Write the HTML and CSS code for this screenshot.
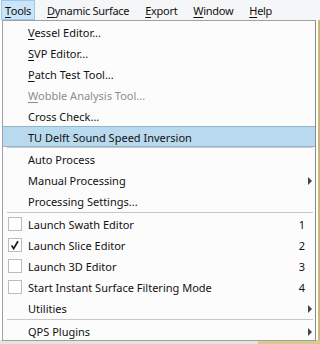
FILE: index.html
```html
<!DOCTYPE html>
<html>
<head>
<meta charset="utf-8">
<link rel="stylesheet" href="styles.css">
</head>
<body>
<div class="bar">
  <span class="top active"><u>T</u>ools</span>
  <span class="top"><u>D</u>ynamic Surface</span>
  <span class="top"><u>E</u>xport</span>
  <span class="top"><u>W</u>indow</span>
  <span class="top"><u>H</u>elp</span>
</div>
<div class="app">
  <div class="canvas"></div>
  <div class="status"><span class="status-fill"></span><span class="status-tan"></span></div>
</div>
<div class="popup">
  <div class="item"><span class="label"><u>V</u>essel Editor...</span></div>
  <div class="item"><span class="label"><u>S</u>VP Editor...</span></div>
  <div class="item"><span class="label"><u>P</u>atch Test Tool...</span></div>
  <div class="item disabled"><span class="label"><u>W</u>obble Analysis Tool...</span></div>
  <div class="item"><span class="label">Cross Check...</span></div>
  <div class="item hover"><span class="label">TU Delft Sound Speed Inversion</span></div>
  <div class="sep"></div>
  <div class="item"><span class="label">Auto Process</span></div>
  <div class="item"><span class="label">Manual Processing</span><span class="arrow"></span></div>
  <div class="item"><span class="label">Processing Settings...</span></div>
  <div class="sep"></div>
  <div class="item"><span class="box"></span><span class="label">Launch Swath Editor</span><span class="key">1</span></div>
  <div class="item"><span class="box"><svg width="12" height="12" viewBox="0 0 12 12"><path d="M2.6 6.4 L4.6 9.6 L9 2.2" fill="none" stroke="#1a1a1a" stroke-width="1.7" stroke-linejoin="miter"/></svg></span><span class="label">Launch Slice Editor</span><span class="key">2</span></div>
  <div class="item"><span class="box"></span><span class="label">Launch 3D Editor</span><span class="key">3</span></div>
  <div class="item"><span class="box"></span><span class="label">Start Instant Surface Filtering Mode</span><span class="key">4</span></div>
  <div class="item"><span class="label">Utilities</span><span class="arrow"></span></div>
  <div class="sep"></div>
  <div class="item"><span class="label">QPS Plugins</span><span class="arrow"></span></div>
</div>
</body>
</html>
```

FILE: styles.css
```css
* { box-sizing: border-box; }
html, body {
  margin: 0;
  padding: 0;
  width: 320px;
  height: 344px;
  overflow: hidden;
  font-family: "Noto Sans", "Open Sans", sans-serif;
  font-size: 11px;
  color: #111111;
  background: #ffffff;
}
u { text-decoration: underline; text-underline-offset: 2px; text-decoration-thickness: 1px; }

.bar {
  height: 20px;
  background: #f5f6f7;
  display: flex;
  align-items: stretch;
  padding-left: 1px;
  gap: 8px;
  white-space: nowrap;
  letter-spacing: -0.3px;
}
.top {
  display: flex;
  align-items: center;
  padding: 0 3px 0 3px;
  border: 1px solid transparent;
  line-height: 1;
  white-space: nowrap;
  flex: none;
}
.top.active {
  background: #cce4f7;
  border-color: #99c9ef;
}

.app {
  height: 324px;
  display: flex;
  flex-direction: column;
}
.canvas {
  flex: 1;
  border-right: 2px solid #c8b67a;
  background: #ffffff;
}
.status {
  height: 4px;
  display: flex;
}
.status-fill { flex: 0 0 258px; background: #e4e4e4; }
.status-tan { flex: 1; background: #d9c98e; }

.popup {
  position: absolute;
  left: 2px;
  top: 20px;
  width: 314px;
  height: 321px;
  overflow: hidden;
  background: #fcfcfc;
  border: 1px solid #a0a0a0;
  border-right-color: #8a8a8a;
  padding-top: 1px;
  display: flex;
  flex-direction: column;
}
.item {
  height: 21px;
  flex: 0 0 21px;
  display: flex;
  align-items: center;
  padding-left: 25px;
  position: relative;
}
.item.disabled { color: #8c8c8c; }
.item.hover {
  background: #b9d9ee;
  border-top: 1px solid #92b6cd;
  border-bottom: 1px solid #92b6cd;
  margin-top: -1px;
  height: 21px;
  flex-basis: 21px;
  padding-top: 1px;
}
.label { flex: 1; white-space: nowrap; }
.key {
  width: 10px;
  margin-right: 10px;
  text-align: right;
}
.arrow {
  width: 0;
  height: 0;
  border-top: 4px solid transparent;
  border-bottom: 4px solid transparent;
  border-left: 4px solid #444444;
  margin-right: 3px;
}
.box {
  position: absolute;
  left: 5px;
  top: 3px;
  width: 14px;
  height: 14px;
  border: 1px solid #bcbcbc;
  background: #ffffff;
  display: flex;
  align-items: center;
  justify-content: center;
}
.sep {
  flex: 0 0 2px;
  height: 2px;
  margin: 0 2px 0 4px;
  border-top: 1px solid #c8c8c8;
}
```
